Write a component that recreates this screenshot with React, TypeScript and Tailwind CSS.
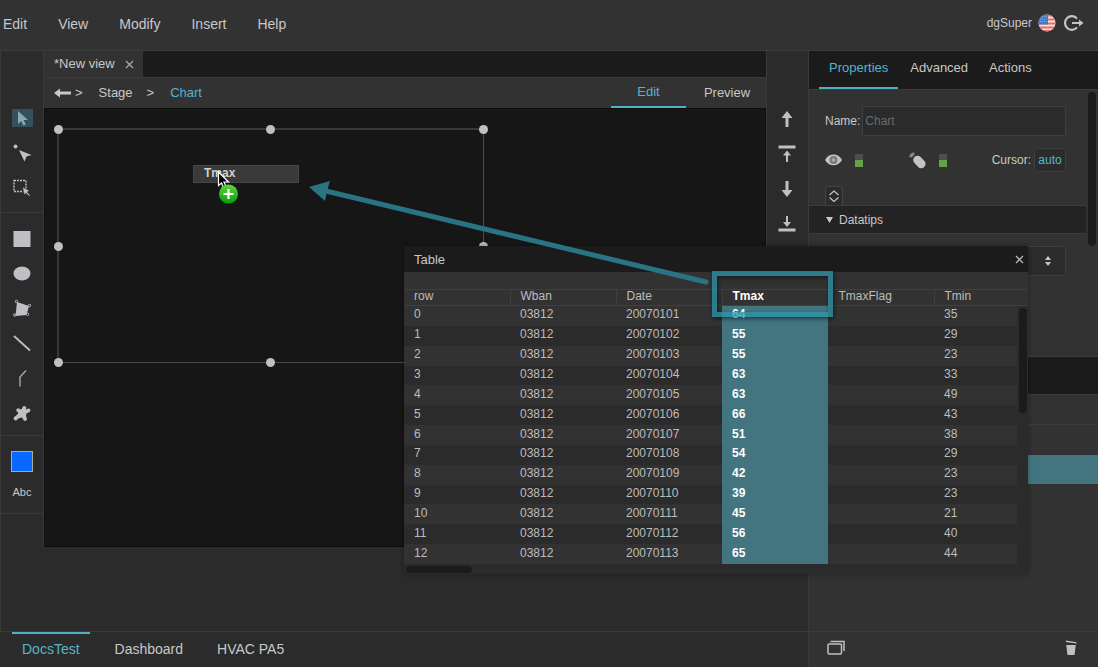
import React from 'react';

const rows = [
  ['0', '03812', '20070101', '64', '', '35'],
  ['1', '03812', '20070102', '55', '', '29'],
  ['2', '03812', '20070103', '55', '', '23'],
  ['3', '03812', '20070104', '63', '', '33'],
  ['4', '03812', '20070105', '63', '', '49'],
  ['5', '03812', '20070106', '66', '', '43'],
  ['6', '03812', '20070107', '51', '', '38'],
  ['7', '03812', '20070108', '54', '', '29'],
  ['8', '03812', '20070109', '42', '', '23'],
  ['9', '03812', '20070110', '39', '', '23'],
  ['10', '03812', '20070111', '45', '', '21'],
  ['11', '03812', '20070112', '56', '', '40'],
  ['12', '03812', '20070113', '65', '', '44'],
];

const columns = ['row', 'Wban', 'Date', 'Tmax', 'TmaxFlag', 'Tmin'];

function Icon({ children }: { children: React.ReactNode }) {
  return (
    <svg width="20" height="20" viewBox="0 0 20 20" fill="#bfc0c4" aria-hidden="true">
      {children}
    </svg>
  );
}

function ToolButton({ label, active, children }: { label: string; active?: boolean; children: React.ReactNode }) {
  return (
    <button
      type="button"
      aria-label={label}
      className="flex h-[35px] w-full shrink-0 items-center justify-center"
    >
      <span className={active ? 'flex h-[18px] w-[21px] items-center justify-center bg-[#35505a]' : 'flex'}>
        <Icon>{children}</Icon>
      </span>
    </button>
  );
}

function Level() {
  return (
    <span className="flex h-[13px] w-2 flex-col justify-end bg-[#4d4d4d]">
      <span className="h-[7px] bg-[#62a244]" />
    </span>
  );
}

function Header() {
  return (
    <header className="flex h-[51px] shrink-0 items-center justify-between border-b border-[#3c3c3c] bg-[#323232] pr-[14px] pl-[3px]">
      <nav className="flex gap-[31px] pb-[2px] text-sm">
        <button type="button">Edit</button>
        <button type="button">View</button>
        <button type="button">Modify</button>
        <button type="button">Insert</button>
        <button type="button">Help</button>
      </nav>
      <div className="flex items-center gap-[6px] pb-1 text-xs">
        <span>dgSuper</span>
        <button type="button" aria-label="Language">
          <svg width="18" height="18" viewBox="0 0 18 18" className="block">
            <clipPath id="flag">
              <circle cx="9" cy="9" r="8.5" />
            </clipPath>
            <g clipPath="url(#flag)">
              <rect width="18" height="18" fill="#f3dfdb" />
              <path d="M0 1.5h18M0 5.5h18M0 9.5h18M0 13.5h18M0 17h18" stroke="#e07468" strokeWidth="2" />
              <rect width="10" height="10.5" fill="#3f7ac9" />
              <path d="M2 2.5h7M2 5h7M2 7.5h7" stroke="#8fb4e4" strokeWidth="1" strokeDasharray="1 1.2" />
            </g>
          </svg>
        </button>
        <button type="button" aria-label="Log out">
          <svg width="22" height="18" viewBox="0 0 22 18" className="block" fill="none" stroke="#c4c4c6" strokeWidth="2.2">
            <path d="M15 4.6A6.800 6.800 0 1 0 15 13.400" />
            <path d="M10 9h8" strokeWidth="2" />
            <path d="M17 5.500L21.500 9 17 12.500z" fill="#c4c4c6" stroke="none" />
          </svg>
        </button>
      </div>
    </header>
  );
}

function Toolbar() {
  return (
    <div className="flex w-[43px] shrink-0 flex-col border-l border-[#3a3a3a] bg-[#2b2b2b]">
      <div className="h-[162px] border-b border-[#3a3a3a] pt-[49px]">
        <ToolButton label="Select" active>
          <path d="M6 3v13l3.2-3 2.2 4.500 2.400-1.100-2.200-4.400H16z" fill="#86a9b2" />
        </ToolButton>
        <ToolButton label="Sub select">
          <circle cx="3.500" cy="3.500" r="2" />
          <path d="M7 7l5.500 11.500 2-5 5-1.500z" />
        </ToolButton>
        <ToolButton label="Marquee select">
          <rect x="2" y="2.500" width="12" height="11" fill="none" stroke="#bfc0c4" strokeWidth="1.400" strokeDasharray="2 1" />
          <path d="M10.500 9l1.800 8 1.700-1.800 3.200 3 1-1-3-3.200 2.300-1.200z" stroke="#2b2b2b" strokeWidth="0.600" />
        </ToolButton>
      </div>
      <div className="h-[223px] border-b border-[#3a3a3a] pt-2">
        <ToolButton label="Rectangle">
          <rect x="1.500" y="2" width="17" height="16" />
        </ToolButton>
        <ToolButton label="Ellipse">
          <ellipse cx="10" cy="9.500" rx="8.500" ry="7" />
        </ToolButton>
        <ToolButton label="Polygon">
          <path d="M5 3l12 4-2.500 9-11 1z" />
          <g fill="#2b2b2b" stroke="#bfc0c4">
            <circle cx="4.500" cy="2.500" r="1.200" />
            <circle cx="17.500" cy="6.500" r="1.200" />
            <circle cx="15.500" cy="15.300" r="1.200" />
            <circle cx="2.800" cy="16" r="1.200" />
          </g>
        </ToolButton>
        <ToolButton label="Line">
          <path d="M2 2l16 14.500" stroke="#bfc0c4" strokeWidth="1.800" />
        </ToolButton>
        <ToolButton label="Polyline">
          <path d="M8 17.500V8l6-6.500" fill="none" stroke="#a8a8aa" strokeWidth="1.400" />
        </ToolButton>
        <ToolButton label="Freeform">
          <g stroke="#bfc0c4" strokeWidth="3.800" strokeLinecap="round">
            <path d="M10 9L6.200 6.200M10 9l2.300-5M10 9l6.500-2.500M10 9l3 6M10 9l-6.500 5.500" />
          </g>
          <path d="M6.500 6l5-1.500 3.500 3-1 4 .5 3-4.500-1-5 1 1-4z" />
        </ToolButton>
      </div>
      <div className="flex h-[78px] flex-col items-center gap-3 border-b border-[#3a3a3a] pt-[15px]">
        <button type="button" aria-label="Fill color" className="h-[21px] w-[22px] border border-[#b3a995] bg-[#0868ff]" />
        <button type="button" className="text-[11px] leading-4">Abc</button>
      </div>
    </div>
  );
}

function OrderStrip() {
  return (
    <div className="flex w-[42px] shrink-0 flex-col border-r border-[#3a3a3a] bg-[#2b2b2b] pt-[50px] pr-[2px]">
      <ToolButton label="Bring forward">
        <path d="M10 2l5.500 7h-4V18h-3V9h-4z" />
      </ToolButton>
      <ToolButton label="Bring to front">
        <path d="M1.500 1.500h17v3h-17zM10 6.500l4 5h-3V18H9v-6.500H6z" />
      </ToolButton>
      <ToolButton label="Send backward">
        <path d="M10 18l5.500-7h-4V2h-3v9h-4z" />
      </ToolButton>
      <ToolButton label="Send to back">
        <path d="M1.500 14.500h17v3h-17zM10 13l4-5h-3V2H9v6H6z" />
      </ToolButton>
    </div>
  );
}

function Handle({ place }: { place: string }) {
  return <span className={`absolute h-[9px] w-[9px] rounded-full bg-[#c0c0c0] ${place}`} />;
}

function Stage() {
  return (
    <div className="relative flex-1 border border-[#0e0e0e] bg-[#161616]">
      <div className="absolute top-[19px] left-3 h-[235px] w-[427px] border border-t-2 border-l-2 border-[#4a4a4a] border-t-[#383838] border-l-[#383838]">
        <Handle place="-top-[5px] -left-[5px]" />
        <Handle place="-top-[5px] left-[207px]" />
        <Handle place="-top-[5px] -right-[5px]" />
        <Handle place="top-[112px] -left-[5px]" />
        <Handle place="top-[112px] -right-[5px]" />
        <Handle place="-bottom-[5px] -left-[5px]" />
        <Handle place="-bottom-[5px] left-[207px]" />
        <Handle place="-right-[5px] -bottom-[5px]" />
      </div>

      {/* Column being dragged onto the chart */}
      <div className="absolute top-[56px] left-[148px] h-[18px] w-[106px] border border-[#474747] bg-[#3a3a3a] pl-[10px] text-xs leading-[14px] font-bold text-[#d0d0d0]">
        Tmax
      </div>
      <svg className="absolute top-[62px] left-[172px]" width="24" height="34" viewBox="0 0 24 34" aria-hidden="true">
        <defs>
          <linearGradient id="add" x1="0" y1="0" x2="0" y2="1">
            <stop offset="0" stopColor="#5fd53a" />
            <stop offset="1" stopColor="#03a00c" />
          </linearGradient>
        </defs>
        <path d="M1.500 1v13.500l3-2.500 2 4.500 2.400-1L7 11h4.500z" fill="#000" stroke="#fff" strokeWidth="1.200" />
        <circle cx="11.500" cy="23" r="9.500" fill="url(#add)" />
        <path d="M11.500 18v10M6.500 23h10" stroke="#fff" strokeWidth="2.200" />
      </svg>
    </div>
  );
}

function Workspace() {
  return (
    <main className="mb-[84px] flex min-w-0 flex-1 flex-col border-x border-[#3a3a3a]">
      <div className="flex h-[26px] shrink-0 bg-[#1b1b1b]">
        <div className="flex items-center gap-[10px] bg-[#323232] pr-[9px] pl-[10px] text-[13px]">
          <span>*New view</span>
          <button type="button" aria-label="Close view">
            <svg width="9" height="9" viewBox="0 0 9 9" stroke="#a8a8a8" strokeWidth="1.300">
              <path d="M1 1l7 7M8 1L1 8" />
            </svg>
          </button>
        </div>
      </div>
      <div className="flex h-[31px] shrink-0 items-stretch justify-between border-t border-[#3a3a3a] bg-[#323232] text-[13px]">
        <div className="flex items-center pl-[10px]">
          <button type="button" aria-label="Back" className="mr-1">
            <svg width="17" height="10" viewBox="0 0 17 10" fill="#c8c8c8">
              <path d="M0 5l6-4.500v3h11v3H6v3z" />
            </svg>
          </button>
          <span>&gt;</span>
          <button type="button" className="mr-[14px] ml-4">Stage</button>
          <span>&gt;</span>
          <button type="button" className="ml-4 text-[#56b5cc]">Chart</button>
        </div>
        <div className="flex">
          <button type="button" className="w-[75px] border-b-2 border-[#4fb0c6] text-[#56b5cc]">Edit</button>
          <button type="button" className="w-20 pl-[2px]">Preview</button>
        </div>
      </div>
      <Stage />
    </main>
  );
}

function Properties() {
  return (
    <aside className="flex w-[289px] shrink-0 flex-col bg-[#323232]">
      <div className="flex h-[39px] shrink-0 gap-[2px] border-b border-[#3c3c3c] bg-[#1b1b1b] pl-[10px] text-[13px]">
        <button type="button" className="border-b-2 border-[#4fb0c6] px-[10px] pb-[2px] text-[#56b5cc]">Properties</button>
        <button type="button" className="px-[10px] pb-1">Advanced</button>
        <button type="button" className="px-[9px] pb-1">Actions</button>
      </div>
      <div className="flex flex-1 text-xs">
        <div className="flex-1">
          <div className="flex h-[115px] flex-col pt-4 pr-5 pl-4">
            <div className="flex items-center gap-[2px]">
              <label htmlFor="name">Name:</label>
              <input
                id="name"
                placeholder="Chart"
                className="h-[30px] min-w-0 flex-1 border border-[#3f3f3f] bg-[#2b2b2b] px-[2px] placeholder:text-[#6a6a6a]"
              />
            </div>
            <div className="mt-3 flex h-6 items-center">
              <svg width="17" height="12" viewBox="0 0 17 12" aria-label="Visible">
                <path d="M0 6C4-1.300 13-1.300 17 6 13 13 4 13 0 6z" fill="#c4c4c4" />
                <circle cx="8.500" cy="6" r="4" fill="#7a7a7a" />
                <circle cx="8.500" cy="6" r="1.800" fill="#aaa" />
              </svg>
              <span className="ml-[13px]"><Level /></span>
              <svg className="ml-[46px]" width="17" height="17" viewBox="0 0 17 17" aria-label="Mouse enabled">
                <path d="M8.500 8l3.800 4" stroke="#c4c4c4" strokeWidth="8.500" strokeLinecap="round" />
                <path d="M0 5.500A5.500 5.500 0 0 1 5.500 0v3.500a2 2 0 0 0-2 2z" fill="#8a8a8a" stroke="#323232" strokeWidth="0.500" />
              </svg>
              <span className="ml-[13px]"><Level /></span>
              <label htmlFor="cursor" className="ml-auto">Cursor:</label>
              <button
                id="cursor"
                type="button"
                className="ml-[3px] h-6 w-8 rounded border border-[#3f3f3f] bg-[#2b2b2b] text-[#56b5cc]"
              >
                auto
              </button>
            </div>
            <button
              type="button"
              aria-label="Expand"
              className="mt-auto flex h-[19px] w-[18px] items-center justify-center rounded-t-sm border border-b-0 border-[#444] bg-[#2b2b2b]"
            >
              <svg width="12" height="12" viewBox="0 0 12 12" fill="none" stroke="#c4c4c4" strokeWidth="1.200">
                <path d="M1.500 5L6 1l4.500 4M1.500 7.500L6 11.500l4.500-4" />
              </svg>
            </button>
          </div>
          <button
            type="button"
            className="flex h-[29px] w-full items-center gap-[6px] border-y border-[#3c3c3c] bg-[#232323] pl-[17px]"
          >
            <svg width="7" height="6" viewBox="0 0 7 6" fill="#c8c8c8">
              <path d="M0 0h7L3.500 6z" />
            </svg>
            Datatips
          </button>
          <div className="relative mt-3 mr-5 ml-4">
            <select
              aria-label="Datatip"
              className="block h-[30px] w-full appearance-none rounded border border-[#3f3f3f] bg-[#2b2b2b]"
            />
            <svg className="pointer-events-none absolute top-[10px] right-[15px]" width="6" height="10" viewBox="0 0 6 10" fill="#c8c8c8">
              <path d="M3 0l3 4H0zM3 10l3-4H0z" />
            </svg>
          </div>
        </div>
        <div className="w-3 shrink-0 pt-[2px] pl-[2px]">
          <div className="h-[154px] w-2 rounded-full bg-[#1b1b1b]" />
        </div>
      </div>
      <div className="h-[39px] shrink-0 border-y border-[#3c3c3c] bg-[#1b1b1b]" />
      <div className="h-[30px] shrink-0 border-b border-[#3c3c3c]" />
      <div className="h-[30px] shrink-0" />
      <div className="h-[29px] shrink-0 bg-[#437580]" />
      <div className="mt-[147px] flex h-9 shrink-0 items-center justify-between border-t border-[#3c3c3c] pr-[21px] pb-1 pl-[18px]">
        <button type="button" aria-label="Layers">
          <svg width="18" height="15" viewBox="0 0 18 15" fill="none" stroke="#c0c0c2" strokeWidth="1.500">
            <rect x="1" y="4" width="13.500" height="10" rx="1" />
            <path d="M3.500 1.500H17V11" />
          </svg>
        </button>
        <button type="button" aria-label="Delete">
          <svg width="12" height="15" viewBox="0 0 12 15" fill="#c0c0c2">
            <path d="M1.200 5h9.600L9.500 15h-7zM1 .5L11.500 2.200v1.300L.800 2z" />
          </svg>
        </button>
      </div>
    </aside>
  );
}

function TableWindow() {
  return (
    <section className="absolute top-[246px] left-[404px] w-[624px] bg-[#2b2b2b] shadow-[0_0_5px_rgba(0,0,0,0.35)]">
      <div className="flex h-[26px] items-center justify-between bg-[#1b1b1b] pr-1 pl-[10px]">
        <h2 className="pt-[2px] text-[13px]">Table</h2>
        <button type="button" aria-label="Close table">
          <svg width="9" height="9" viewBox="0 0 9 9" stroke="#b8b8b8" strokeWidth="1.300">
            <path d="M1 1l7 7M8 1L1 8" />
          </svg>
        </button>
      </div>
      <div className="h-[17px] bg-[#323232]" />
      <div className="flex">
        <table className="h-[275px] flex-1 table-fixed border-collapse text-left text-xs leading-4 text-[#bdbdbd]">
          <thead>
            <tr className="h-4 bg-[#323232]">
              {columns.map((name, i) => (
                <th
                  key={name}
                  className={
                    (i < 5 ? 'w-[106px] ' : '') +
                    (i > 0 ? 'border-l ' : '') +
                    (name === 'Tmax' ? 'font-bold text-white ' : 'font-normal ') +
                    'border-y border-[#3f3f3f] p-0 pb-[3px] pl-[10px] leading-3'
                  }
                >
                  {name}
                </th>
              ))}
            </tr>
          </thead>
          <tbody>
            {rows.map((row) => (
              <tr key={row[0]} className="odd:bg-[#323232]">
                {row.map((cell, i) => (
                  <td
                    key={i}
                    className={i === 3 ? 'bg-[#437580] p-0 pb-[3px] pl-[10px] font-bold text-white' : 'p-0 pb-[3px] pl-[10px]'}
                  >
                    {cell}
                  </td>
                ))}
              </tr>
            ))}
          </tbody>
        </table>
        <div className="w-[11px]">
          <div className="h-[17px] border-y border-[#3f3f3f] bg-[#323232]" />
          <div className="mt-[2px] ml-[2px] h-[105px] w-2 rounded-full bg-[#1b1b1b]" />
        </div>
      </div>
      <div className="h-[10px] pt-[2px] pl-[2px]">
        <div className="h-[7px] w-[66px] rounded-full bg-[#1b1b1b]" />
      </div>

      {/* Callout round the Tmax heading */}
      <div className="absolute top-[25px] left-[308px] h-[46px] w-[121px] border-[5px] border-[#2b95a9]/75 shadow-[1px_2px_4px_rgba(0,0,0,0.5),inset_1px_2px_4px_rgba(0,0,0,0.5)]" />
    </section>
  );
}

export default function App() {
  return (
    <div className="relative flex h-screen flex-col overflow-hidden bg-[#2b2b2b] font-['Liberation_Sans',Arial,sans-serif] text-[#c8c8ca]">
      <Header />
      <div className="flex min-h-0 flex-1">
        <div className="flex min-w-0 flex-1 flex-col">
          <div className="flex min-h-0 flex-1">
            <Toolbar />
            <Workspace />
            <OrderStrip />
          </div>
          <footer className="flex h-9 shrink-0 border-t border-r border-[#3a3a3a] pl-3 text-sm">
            <button type="button" className="border-t-2 border-[#4fb0c6] px-[10px] pb-1 text-[#56b5cc]">DocsTest</button>
            <button type="button" className="ml-[25px] pb-[2px]">Dashboard</button>
            <button type="button" className="ml-[34px] pb-[2px]">HVAC PA5</button>
          </footer>
        </div>
        <Properties />
      </div>

      <TableWindow />

      {/* Drag direction arrow */}
      <svg className="pointer-events-none absolute top-[176px] left-[304px]" width="410" height="114" viewBox="0 0 410 114" aria-hidden="true">
        <path d="M402 106L22 15" stroke="#297482" strokeWidth="5" strokeLinecap="round" />
        <path d="M5 11l21-6-3 10-2 10z" fill="#297482" />
      </svg>
    </div>
  );
}
